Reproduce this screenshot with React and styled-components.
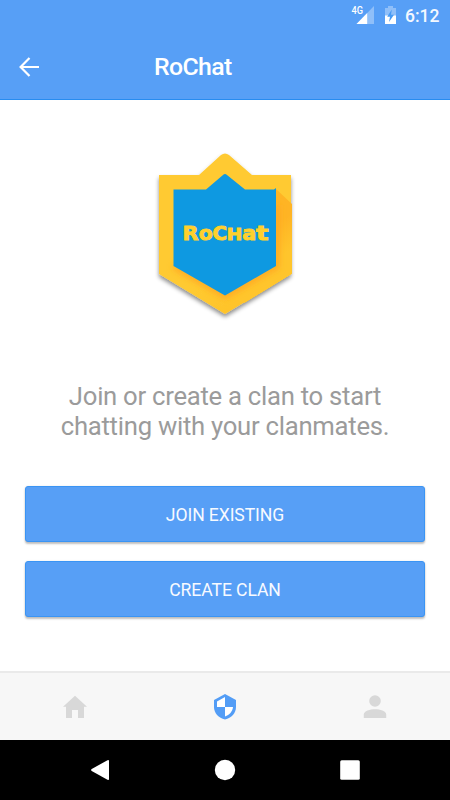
import React from "react";
import styled, { createGlobalStyle } from "styled-components";

const GlobalStyle = createGlobalStyle`
  * { box-sizing: border-box; }
  body { margin: 0; background: #fff; font-family: Roboto, sans-serif; }
`;

const Screen = styled.div`
  width: 450px;
  height: 800px;
  display: flex;
  flex-direction: column;
  overflow: hidden;
  background: #fff;
`;

const Header = styled.header`
  height: 100px;
  flex: none;
  background: #579ff6;
  border-bottom: 1px solid #288cf0;
`;

const StatusBar = styled.div`
  height: 32px;
  display: flex;
  justify-content: flex-end;
  padding-right: 9px;
`;

const StatusIcons = styled.svg`
  width: 50px;
  height: 32px;
  display: block;
  margin-right: 5px;
`;

const Clock = styled.span`
  width: 36px;
  font-size: 17.5px;
  font-weight: 500;
  line-height: 32px;
  color: #f3f8ff;
  white-space: nowrap;
`;

const Toolbar = styled.div`
  height: 67px;
  display: flex;
  align-items: center;
  padding-left: 19px;
`;

const BackIcon = styled.svg`
  width: 21px;
  height: 20px;
  margin-top: 2px;
`;

const Title = styled.h1`
  margin: 2px 0 0 114px;
  font-size: 24.8px;
  line-height: 30px;
  font-weight: 500;
  letter-spacing: -0.6px;
  color: #fff;
`;

const Content = styled.main`
  flex: 1;
  padding: 45px 25px 0;
  display: flex;
  flex-direction: column;
  align-items: center;
`;

const Logo = styled.svg`
  width: 160px;
  height: 180px;
  flex: none;
`;

const Message = styled.p`
  margin: 57px 0 0;
  height: 60px;
  font-size: 25.7px;
  line-height: 29.6px;
  letter-spacing: -0.27px;
  color: #9b9b9b;
  text-align: center;
  white-space: nowrap;
`;

const Actions = styled.div`
  width: 100%;
  margin-top: 44px;
  display: grid;
  gap: 19px;
`;

const ActionButton = styled.button`
  height: 56px;
  padding: 2px 0 0;
  border: 1px solid #3a94f4;
  border-radius: 3px;
  background: #579ff6;
  box-shadow: 0 2px 2px rgba(0, 0, 0, 0.24), 0 0 2px rgba(0, 0, 0, 0.1);
  font: 400 17.6px/20px Roboto, sans-serif;
  letter-spacing: -0.1px;
  color: #f7faff;
`;

const TabBar = styled.nav`
  height: 69px;
  flex: none;
  display: grid;
  grid-template-columns: repeat(3, 1fr);
  background: #f7f7f7;
  border-top: 2px solid #eaeaea;
`;

const Tab = styled.div`
  display: flex;
  align-items: center;
  justify-content: center;
  color: ${(p) => (p.$active ? "#539df6" : "#d8d8d8")};
`;

const TabIcon = styled.svg`
  width: 30px;
  height: 30px;
  fill: currentColor;
`;

const SystemBar = styled.div`
  height: 60px;
  flex: none;
  display: flex;
  align-items: center;
  justify-content: center;
  gap: 95px;
  background: #000;
`;

const SystemIcon = styled.svg`
  width: 30px;
  height: 30px;
  fill: #fff;
`;

function ClanLogo() {
  return (
    <Logo viewBox="0 0 160 180" role="img" aria-label="RoChat">
      <defs>
        <linearGradient id="gold" x1="0" y1="0" x2="0.6" y2="1">
          <stop offset="0" stopColor="#ffca32" />
          <stop offset="0.75" stopColor="#ffca30" />
          <stop offset="1" stopColor="#ffc22a" />
        </linearGradient>
        <linearGradient id="shade" gradientUnits="userSpaceOnUse" x1="128" y1="80" x2="144" y2="106">
          <stop offset="0" stopColor="#ffb424" />
          <stop offset="1" stopColor="#ffc52c" />
        </linearGradient>
        <filter id="drop" x="-10%" y="-10%" width="120%" height="125%">
          <feDropShadow dx="0" dy="3" stdDeviation="2" floodColor="#000" floodOpacity="0.45" />
        </filter>
        <filter id="soft" x="-20%" y="-20%" width="140%" height="140%">
          <feGaussianBlur stdDeviation="3" />
        </filter>
        <clipPath id="badge">
          <path d="M13 30H54L76 10Q80 7 84 10L107 30H147V129L80 170L13 129Z" />
        </clipPath>
      </defs>
      <path d="M14 30H54L76 10Q80 7 84 10L107 30H146V129L80 169L14 129Z" fill="url(#gold)" filter="url(#drop)" />
      <g clipPath="url(#badge)">
        <path d="M131 44L147 59V129L100 158L80 150L131 121Z" fill="url(#shade)" />
        <path d="M29 121L80 150L131 121V60" fill="none" stroke="#ffa622" strokeWidth="6" filter="url(#soft)" />
      </g>
      <path d="M28.5 44.5H61L78 30Q80 28 82 30L100 44.5H129L131 43V121L80 150.5L28.5 121Z" fill="#0e99e1" />
      <text
        y="95"
        fontFamily="'DejaVu Sans', sans-serif"
        fontWeight="700"
        fontSize="19.5"
        fill="#ffd02d"
        stroke="#ffd02d"
        strokeWidth="0.9"
      >
        <tspan x="37.5" textLength="16" lengthAdjust="spacingAndGlyphs">R</tspan>
        <tspan x="53.7" textLength="14" lengthAdjust="spacingAndGlyphs">o</tspan>
        <tspan x="67.5" textLength="14.5" lengthAdjust="spacingAndGlyphs">C</tspan>
        <tspan x="81.8" fontSize="15.5" textLength="15.5" lengthAdjust="spacingAndGlyphs">H</tspan>
        <tspan x="97.3" fontSize="19.5" textLength="14" lengthAdjust="spacingAndGlyphs">a</tspan>
        <tspan x="111" fontSize="19.5" textLength="12.5" lengthAdjust="spacingAndGlyphs">t</tspan>
      </text>
    </Logo>
  );
}

export default function App() {
  return (
    <>
      <GlobalStyle />
      <Screen>
        <Header>
          <StatusBar>
            <StatusIcons viewBox="350 0 50 32">
              <text x="351.5" y="14" fontFamily="Roboto, sans-serif" fontSize="10.5" fontWeight="500" textLength="11.5" lengthAdjust="spacingAndGlyphs" fill="#fff">4G</text>
              <path d="M356.5 24L374 6V24Z" fill="#8fbff9" />
              <path d="M356.5 24L367.2 13V24Z" fill="#fff" />
              <path d="M388 6H393V8H396V16H385V8H388Z" fill="#8fbff9" />
              <path d="M385 15.5H396V24H385Z" fill="#fff" />
              <path d="M391.8 9.5L387.2 16.7H390L389 22L394 14.7H391Z" fill="#479bf5" />
            </StatusIcons>
            <Clock>6:12</Clock>
          </StatusBar>
          <Toolbar>
            <BackIcon viewBox="0 0 21 20" fill="none" stroke="#fff" strokeWidth="2.2">
              <path d="M20 10H2M10.5 1L1.6 10L10.5 19" />
            </BackIcon>
            <Title>RoChat</Title>
          </Toolbar>
        </Header>
        <Content>
          <ClanLogo />
          <Message>
            Join or create a clan to start
            <br />
            chatting with your clanmates.
          </Message>
          <Actions>
            <ActionButton>JOIN EXISTING</ActionButton>
            <ActionButton>CREATE CLAN</ActionButton>
          </Actions>
        </Content>
        <TabBar>
          <Tab>
            <TabIcon viewBox="0 0 30 30">
              <path d="M15 3.7L27 14.7H24V26H18V18H12V26H6V14.7H3Z" />
            </TabIcon>
          </Tab>
          <Tab $active>
            <TabIcon viewBox="0 0 30 30">
              <path d="M15 2L26 8V15C26 21 21.5 26 15 27.5C8.5 26 4 21 4 15V8Z" />
              <path d="M15 5V15H7V9.5ZM15 15H23C22.5 19.5 19.5 23 15 24.5Z" fill="#fff" />
            </TabIcon>
          </Tab>
          <Tab>
            <TabIcon viewBox="0 0 30 30">
              <circle cx="15" cy="9" r="5.8" />
              <path d="M3.8 26V22.5C3.8 19 10 17.3 15 17.3S26.2 19 26.2 22.5V26Z" />
            </TabIcon>
          </Tab>
        </TabBar>
        <SystemBar>
          <SystemIcon viewBox="0 0 30 30">
            <path d="M22.5 5.2Q24 4.5 24 6V24Q24 25.5 22.5 24.7L6.7 16Q5.5 15 6.7 14Z" />
          </SystemIcon>
          <SystemIcon viewBox="0 0 30 30">
            <circle cx="15" cy="15" r="10.2" />
          </SystemIcon>
          <SystemIcon viewBox="0 0 30 30">
            <rect x="5.2" y="5.2" width="19.6" height="19.6" rx="1.5" />
          </SystemIcon>
        </SystemBar>
      </Screen>
    </>
  );
}
